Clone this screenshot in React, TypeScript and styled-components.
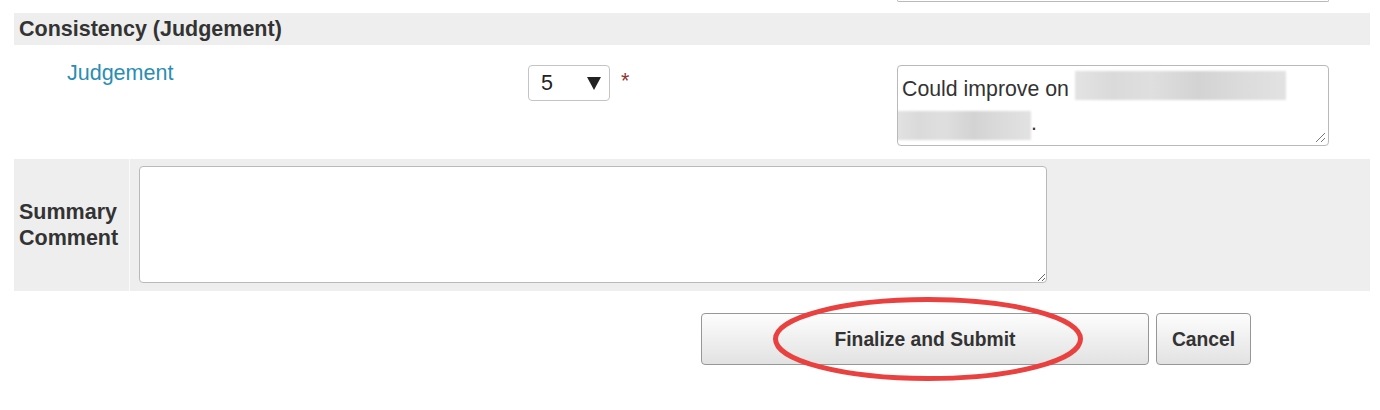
import React from "react";
import styled, { createGlobalStyle } from "styled-components";

const GlobalStyle = createGlobalStyle`
  html, body { margin: 0; padding: 0; background: #fff; }
  body {
    font-family: "Liberation Sans", Arial, sans-serif;
    color: #333;
  }
  *, *::before, *::after { box-sizing: border-box; }
`;

const Form = styled.div`
  width: 1380px;
  min-height: 410px;
  padding: 0 10px 0 14px;
`;

/* bottom edge of the field that belongs to the criterion above */
const PrevFieldTail = styled.div`
  height: 13px;
  padding-left: 883px;
`;

const PrevFieldEdge = styled.div`
  width: 432px;
  height: 2px;
  border: 1px solid #b9b9b9;
  border-top: none;
  border-radius: 0 0 4px 4px;
`;

const SectionHeader = styled.div`
  height: 32px;
  background: #eee;
  padding-left: 5px;
  font-size: 21.5px;
  line-height: 32px;
  font-weight: bold;
  color: #333;
`;

const CriterionRow = styled.div`
  display: grid;
  grid-template-columns: 461px 369px 432px;
  height: 114px;
  padding: 20px 0 0 53px;
`;

const CriterionLabel = styled.a`
  display: block;
  margin-top: -5px;
  font-size: 21.5px;
  line-height: 26px;
  color: #2a8db3;
  text-decoration: none;
`;

const ScoreCell = styled.div`
  display: flex;
  align-items: flex-start;
`;

const SelectBox = styled.div`
  width: 82px;
  height: 36px;
  display: flex;
  align-items: center;
  justify-content: space-between;
  padding: 0 8px 0 12px;
  border: 1px solid #c4c4c4;
  border-radius: 4px;
  background: #fff;
  font-size: 21.5px;
  color: #222;
`;

const RequiredMark = styled.span`
  margin: 3px 0 0 11px;
  font-size: 21.5px;
  line-height: 26px;
  color: #8f3535;
`;

const CommentBox = styled.div`
  position: relative;
  width: 432px;
  height: 81px;
  padding: 5px 5px 5px 4px;
  border: 1px solid #b9b9b9;
  border-radius: 4px;
  background: #fff;
  font-size: 21.3px;
  line-height: 34px;
  color: #333;
  overflow: hidden;
`;

const Redacted = styled.span<{ $width: number; $shift: number; $lead?: number }>`
  display: inline-block;
  width: ${(p) => p.$width}px;
  height: 29px;
  margin-left: ${(p) => p.$lead ?? 0}px;
  vertical-align: ${(p) => p.$shift}px;
  background: linear-gradient(
    90deg,
    #e3e3e3 0%,
    #dadada 18%,
    #dfdfdf 36%,
    #d3d3d3 58%,
    #dbdbdb 78%,
    #e2e2e2 100%
  );
  filter: blur(1px);
`;

const Grip = styled.svg`
  position: absolute;
  right: 2px;
  bottom: 2px;
  width: 12px;
  height: 12px;
`;

const SummaryRow = styled.div`
  display: grid;
  grid-template-columns: 115px 1fr;
  height: 132px;
  background: #eee;
`;

const SummaryLabel = styled.div`
  display: flex;
  align-items: center;
  padding-left: 5px;
  font-size: 21.5px;
  line-height: 26px;
  font-weight: bold;
  color: #333;
`;

const SummaryField = styled.div`
  border-left: 1px solid #fafafa;
  padding: 7px 0 8px 9px;
`;

const SummaryInput = styled.textarea`
  display: block;
  width: 908px;
  height: 117px;
  margin: 0;
  padding: 5px;
  border: 1px solid #b9b9b9;
  border-radius: 4px;
  background: #fff;
  font-family: inherit;
  font-size: 21.3px;
  color: #333;
  outline: none;
`;

const ButtonRow = styled.div`
  display: flex;
  gap: 7px;
  margin-top: 22px;
  padding-left: 687px;
`;

const Highlighted = styled.div`
  position: relative;
`;

const Button = styled.button<{ $width: number }>`
  width: ${(p) => p.$width}px;
  height: 52px;
  padding: 1px 0 0;
  border: 1px solid #979797;
  border-radius: 4px;
  background: linear-gradient(#fdfdfd, #e2e2e2);
  font-family: inherit;
  font-size: 19.3px;
  font-weight: bold;
  color: #333;
  cursor: pointer;
`;

/* red marker ring drawn around the submit button */
const Circle = styled.svg`
  position: absolute;
  left: 60px;
  top: -20px;
  width: 340px;
  height: 92px;
  pointer-events: none;
`;

const ResizeGrip = () => (
  <Grip viewBox="0 0 12 12">
    <line x1="11" y1="2" x2="2" y2="11" stroke="#777" strokeWidth="1" />
    <line x1="11" y1="7" x2="7" y2="11" stroke="#777" strokeWidth="1" />
  </Grip>
);

export default function App() {
  return (
    <>
      <GlobalStyle />
      <Form>
        <PrevFieldTail>
          <PrevFieldEdge />
        </PrevFieldTail>

        <SectionHeader>Consistency (Judgement)</SectionHeader>

        <CriterionRow>
          <div>
            <CriterionLabel href="#">Judgement</CriterionLabel>
          </div>
          <ScoreCell>
            <SelectBox>
              <span>5</span>
              <svg width="14" height="13" viewBox="0 0 14 13">
                <polygon points="0,0 14,0 7,13" fill="#222" />
              </svg>
            </SelectBox>
            <RequiredMark>*</RequiredMark>
          </ScoreCell>
          <CommentBox>
            Could improve on <Redacted $width={211} $shift={-4} />
            <br />
            <Redacted $width={137} $shift={-10} $lead={-8} />.
            <ResizeGrip />
          </CommentBox>
        </CriterionRow>

        <SummaryRow>
          <SummaryLabel>
            Summary
            <br />
            Comment
          </SummaryLabel>
          <SummaryField>
            <SummaryInput />
          </SummaryField>
        </SummaryRow>

        <ButtonRow>
          <Highlighted>
            <Button $width={448}>Finalize and Submit</Button>
            <Circle viewBox="0 0 340 92">
              <ellipse
                cx="167"
                cy="46"
                rx="152.5"
                ry="39.5"
                fill="none"
                stroke="#e8413f"
                strokeWidth="5"
              />
            </Circle>
          </Highlighted>
          <Button $width={95}>Cancel</Button>
        </ButtonRow>
      </Form>
    </>
  );
}
